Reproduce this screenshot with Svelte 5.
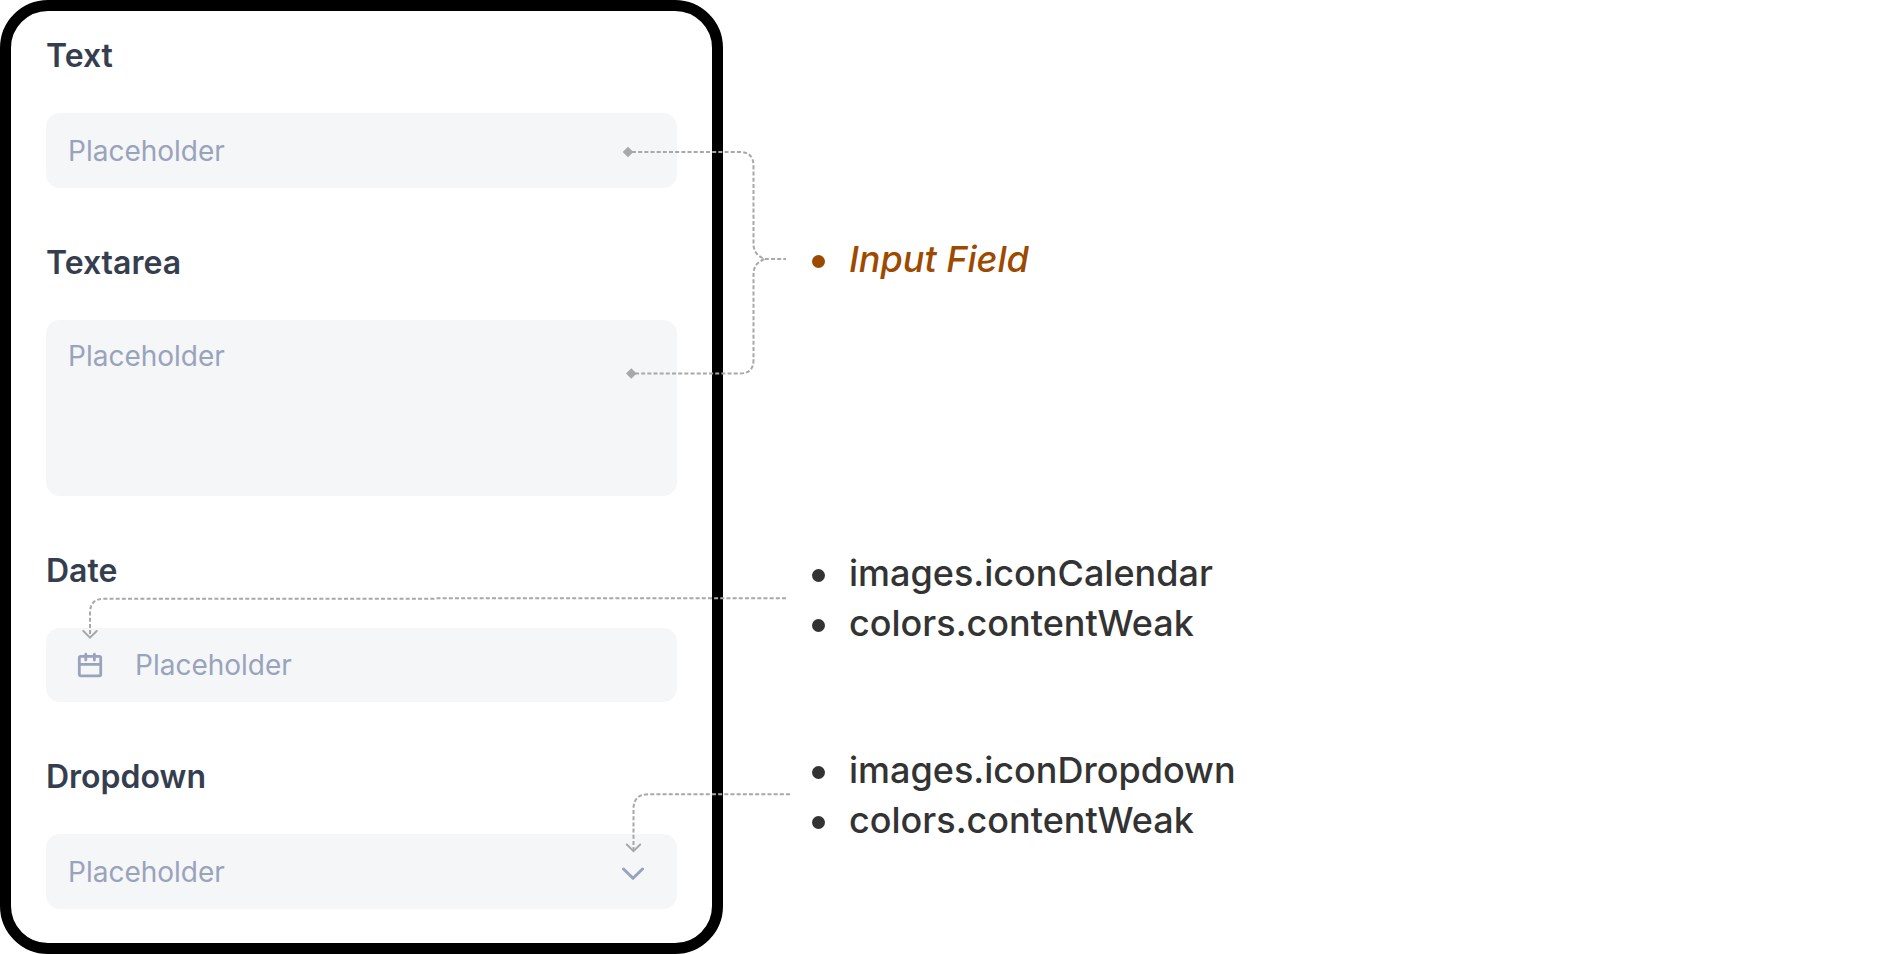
<script>
  const notes = [
    { kind: 'for-inputs', items: ['Input Field'] },
    { kind: 'for-date', items: ['images.iconCalendar', 'colors.contentWeak'] },
    { kind: 'for-dropdown', items: ['images.iconDropdown', 'colors.contentWeak'] }
  ];
</script>

<main class="page">
  <form class="panel">
    <div class="field">
      <label for="text">Text</label>
      <input id="text" class="control" type="text" placeholder="Placeholder" />
    </div>

    <div class="field">
      <label for="textarea">Textarea</label>
      <textarea id="textarea" class="control" placeholder="Placeholder"></textarea>
    </div>

    <div class="field">
      <label for="date">Date</label>
      <div class="control with-icon">
        <svg class="calendar" viewBox="0 0 26 26" aria-hidden="true">
          <rect x="2.3" y="4.3" width="21.4" height="19.6" rx="1.4" />
          <path d="M2.3 12.4H23.7M8.8 2.2V8M17.4 2.2V8" />
        </svg>
        <input id="date" type="text" placeholder="Placeholder" />
      </div>
    </div>

    <div class="field">
      <label for="dropdown">Dropdown</label>
      <div class="control with-icon select">
        <select id="dropdown">
          <option>Placeholder</option>
        </select>
        <svg class="chevron" viewBox="0 0 24 16" aria-hidden="true">
          <path d="M2.5 5L12 14.3L21.5 5" />
        </svg>
      </div>
    </div>
  </form>

  <aside class="notes">
    {#each notes as note}
      <ul class={note.kind}>
        {#each note.items as item}
          <li>{item}</li>
        {/each}
      </ul>
    {/each}
  </aside>

  <svg class="connectors" width="800" height="954" viewBox="0 0 800 954" aria-hidden="true">
    <g class="dashed">
      <path d="M632 152H740Q753.5 152 753.5 166V244Q753.5 255 765 259H786" />
      <path d="M635 373.5H740Q753.5 373.5 753.5 360V274Q753.5 263 765 259" />
      <path d="M786 598.3H436L434 598.8H104Q90 598.8 90 613V637" />
      <path d="M790 794.3H648Q633.5 794.3 633.5 809V850" />
    </g>
    <g class="heads">
      <path d="M83.3 631L90 637.6L96.7 631M626.8 844.5L633.5 851.1L640.2 844.5" />
    </g>
    <path class="ends" d="M628 146.7L633.3 152L628 157.3L622.7 152ZM631.3 368.2L636.6 373.5L631.3 378.8L626 373.5Z" />
  </svg>
</main>

<style>
  :global(body) {
    margin: 0;
    background: #fff;
  }

  .page {
    position: relative;
    display: flex;
    align-items: flex-start;
    font-family: Inter, "Liberation Sans", sans-serif;
  }

  .panel {
    box-sizing: border-box;
    flex: 0 0 auto;
    width: 100%;
    max-width: 723px;
    display: flex;
    flex-direction: column;
    gap: 55px;
    padding: 25px 35px 34px;
    border: 11px solid #000;
    border-radius: 48px;
  }

  .field {
    display: flex;
    flex-direction: column;
    gap: 37px;
  }

  label {
    font-size: 32px;
    font-weight: 600;
    line-height: 40px;
    color: #353e4f;
  }

  .control {
    box-sizing: border-box;
    width: 100%;
    height: 75px;
    border: 0;
    border-radius: 14px;
    background: #f5f6f8;
  }

  input,
  textarea,
  select {
    margin: 0;
    padding: 0 22px;
    border: 0;
    outline: 0;
    font: 400 28px/38px Inter, "Liberation Sans", sans-serif;
    color: #9aa3bc;
  }

  textarea {
    display: block;
    padding: 17px 22px;
    resize: none;
  }

  textarea.control {
    height: 176px;
  }

  ::placeholder {
    color: #9aa3bc;
    opacity: 1;
  }

  .with-icon {
    display: flex;
    align-items: center;
    gap: 32px;
    height: 74px;
    padding-left: 31px;
  }

  .with-icon input,
  .with-icon select {
    flex: 1;
    min-width: 0;
    padding: 0;
    background: transparent;
  }

  .select {
    height: 75px;
    padding: 0 32px 0 22px;
  }

  select {
    appearance: none;
  }

  .calendar,
  .chevron {
    flex: none;
    fill: none;
    stroke: #9aa3bc;
    stroke-width: 3;
    stroke-linecap: round;
    stroke-linejoin: round;
  }

  .calendar {
    width: 26px;
    height: 26px;
    stroke-width: 2.8;
  }

  .chevron {
    width: 24px;
    height: 16px;
  }

  .notes {
    flex: 1;
    padding: 234px 24px 0 89px;
    font-size: 36px;
    font-weight: 500;
    line-height: 50px;
    color: #333;
  }

  ul {
    margin: 0;
    padding: 0;
    list-style: none;
  }

  li {
    display: flex;
    gap: 24px;
  }

  li::before {
    content: "";
    flex: none;
    width: 13px;
    height: 13px;
    margin-top: 21px;
    border-radius: 50%;
    background: currentColor;
  }

  .for-inputs {
    font-style: italic;
    color: #9c4a00;
  }

  .for-date {
    margin-top: 264px;
  }

  .for-dropdown {
    margin-top: 97px;
  }

  .connectors {
    position: absolute;
    top: 0;
    left: 0;
    pointer-events: none;
    fill: none;
    stroke: #a8a8a8;
    stroke-width: 2;
  }

  .dashed {
    stroke-dasharray: 4 2.17;
  }

  .heads {
    stroke-linecap: round;
  }

  .ends {
    fill: #a8a8a8;
    stroke: none;
  }
</style>
